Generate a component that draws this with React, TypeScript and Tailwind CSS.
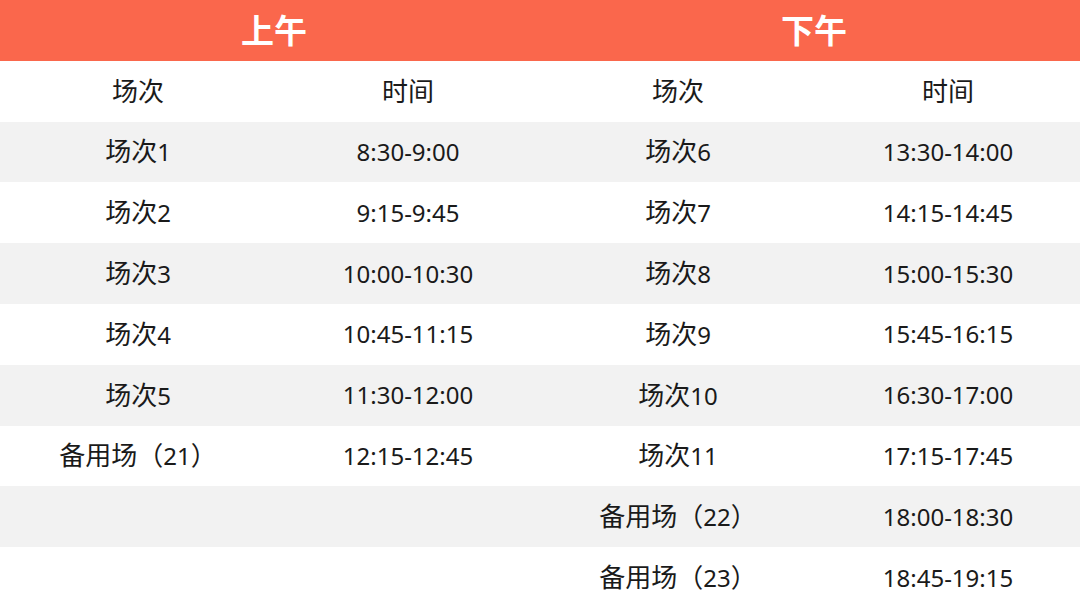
const rows: [string, string, string, string][] = [
  ['场次1', '8:30-9:00', '场次6', '13:30-14:00'],
  ['场次2', '9:15-9:45', '场次7', '14:15-14:45'],
  ['场次3', '10:00-10:30', '场次8', '15:00-15:30'],
  ['场次4', '10:45-11:15', '场次9', '15:45-16:15'],
  ['场次5', '11:30-12:00', '场次10', '16:30-17:00'],
  ['备用场（21）', '12:15-12:45', '场次11', '17:15-17:45'],
  ['', '', '备用场（22）', '18:00-18:30'],
  ['', '', '备用场（23）', '18:45-19:15'],
];

const font = { fontFamily: '"Noto Sans", "Noto Sans CJK SC", sans-serif' };

// CJK glyphs look a bit larger than the digits in the original
function Cell({ text }: { text: string }) {
  const parts = text.split(/([\u3000-\u9fff\uff00-\uffef]+)/).filter(Boolean);
  return (
    <div className="flex items-center justify-center pl-[6px] text-[24px]">
      <span>
        {parts.map((p, k) =>
          /[\u3000-\u9fff\uff00-\uffef]/.test(p) ? (
            <span key={k} className="text-[26px]">
              {p}
            </span>
          ) : (
            <span key={k}>{p}</span>
          )
        )}
      </span>
    </div>
  );
}

export default function App() {
  return (
    <div className="w-[1080px] h-[608px] overflow-hidden bg-white text-[#1a1a1a]" style={font}>
      <div className="grid grid-cols-2 h-[60.8px] bg-[#fa674c] text-white text-[33px] font-bold">
        <div className="flex items-center justify-center pl-[8px]">上午</div>
        <div className="flex items-center justify-center pl-[8px]">下午</div>
      </div>
      <div className="grid grid-cols-4 h-[60.8px]">
        <Cell text="场次" />
        <Cell text="时间" />
        <Cell text="场次" />
        <Cell text="时间" />
      </div>
      {rows.map((r, i) => (
        <div
          key={i}
          className={`grid grid-cols-4 h-[60.8px] ${i % 2 === 0 ? 'bg-[#f2f2f2]' : 'bg-white'}`}
        >
          {r.map((c, j) => (
            <Cell key={j} text={c} />
          ))}
        </div>
      ))}
    </div>
  );
}
